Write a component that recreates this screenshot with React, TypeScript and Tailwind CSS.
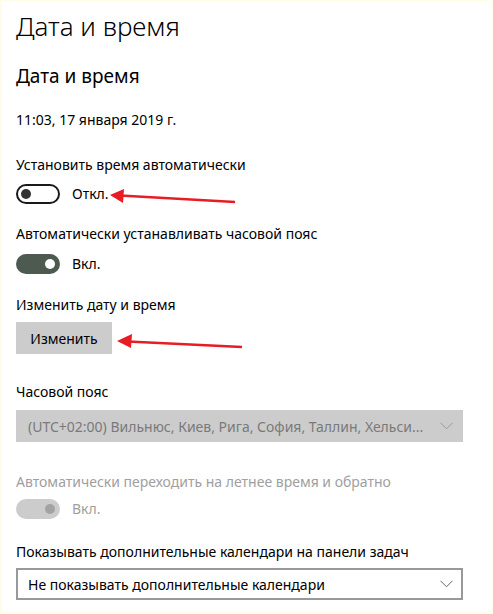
import React from "react";

const font = { fontFamily: '"Segoe UI", "Noto Sans", "Open Sans", sans-serif' };

function Chevron({ color }: { color: string }) {
  return (
    <svg width="13" height="8" viewBox="0 0 13 8" fill="none" className="shrink-0">
      <path d="M0.5 0.8 L6.5 6.8 L12.5 0.8" stroke={color} strokeWidth="1" />
    </svg>
  );
}

function Toggle({ state }: { state: "off" | "on" | "disabled" }) {
  if (state === "off")
    return (
      <div className="w-[44px] h-[20px] rounded-full border-2 border-[#1a1a1a] flex items-center pl-[3px] box-border">
        <div className="w-[10px] h-[10px] rounded-full bg-[#333333]" />
      </div>
    );
  if (state === "on")
    return (
      <div className="w-[44px] h-[20px] rounded-full bg-[#4c5a50] flex items-center justify-end pr-[5px]">
        <div className="w-[10px] h-[10px] rounded-full bg-white" />
      </div>
    );
  return (
    <div className="w-[44px] h-[20px] rounded-full bg-[#cccccc] flex items-center justify-end pr-[5px]">
      <div className="w-[10px] h-[10px] rounded-full bg-[#a3a3a3]" />
    </div>
  );
}

export default function App() {
  return (
    <div className="w-[493px] h-[614px] bg-[#fffde9] pt-[1px] pl-[2px]" style={font}>
      <div className="relative w-[489px] h-[610px] bg-white pl-[14px] pt-[7px] box-border text-black">
        <div className="h-[36px] text-[26px] leading-[36px] font-light">Дата и время</div>
        <div className="mt-[18px] h-[28px] text-[19px] leading-[28px]">Дата и время</div>
        <div className="mt-[20px] h-[20px] text-[14px] leading-[20px]">11:03, 17 января 2019 г.</div>

        <div className="mt-[25px] h-[20px] text-[14px] leading-[20px]">Установить время автоматически</div>
        <div className="mt-[9px] h-[20px] flex items-center gap-[12px]">
          <Toggle state="off" />
          <span className="text-[14px] leading-[20px]">Откл.</span>
        </div>

        <div className="mt-[20px] h-[20px] text-[14px] leading-[20px]">Автоматически устанавливать часовой пояс</div>
        <div className="mt-[10px] h-[20px] flex items-center gap-[12px]">
          <Toggle state="on" />
          <span className="text-[14px] leading-[20px]">Вкл.</span>
        </div>

        <div className="mt-[21px] h-[20px] text-[14px] leading-[20px]">Изменить дату и время</div>
        <div className="mt-[7px] w-[96px] h-[32px] bg-[#cccccc] flex items-center justify-center text-[14px]">
          Изменить
        </div>

        <div className="mt-[28px] h-[20px] text-[14px] leading-[20px]">Часовой пояс</div>
        <div className="mt-[8px] w-[447px] h-[32px] bg-[#cccccc] flex items-center justify-between gap-[8px] pl-[12px] pr-[10px] text-[14px] text-[#7a7a7a]">
          <span className="whitespace-nowrap overflow-hidden min-w-0">(UTC+02:00) Вильнюс, Киев, Рига, София, Таллин, Хельси...</span>
          <Chevron color="#9a9a9a" />
        </div>

        <div className="mt-[30px] h-[20px] text-[14px] leading-[20px] text-[#a0a0a0]">
          Автоматически переходить на летнее время и обратно
        </div>
        <div className="mt-[7px] h-[20px] flex items-center gap-[12px]">
          <Toggle state="disabled" />
          <span className="text-[14px] leading-[20px] text-[#a0a0a0]">Вкл.</span>
        </div>

        <div className="mt-[23px] h-[20px] text-[14px] leading-[20px]">
          Показывать дополнительные календари на панели задач
        </div>
        <div className="mt-[6px] w-[447px] h-[32px] border-2 border-[#999999] box-border flex items-center justify-between pl-[10px] pr-[8px] text-[14px]">
          <span>Не показывать дополнительные календари</span>
          <Chevron color="#666666" />
        </div>

        <svg className="absolute left-0 top-0" width="489" height="610" viewBox="2 1 489 610">
          <line x1="235" y1="202" x2="120" y2="195.5" stroke="#e81c24" strokeWidth="2.5" />
          <polygon points="110,195 124,189 123,203" fill="#e81c24" />
          <line x1="242" y1="347" x2="128" y2="341.5" stroke="#e81c24" strokeWidth="2.5" />
          <polygon points="117,341 132,334 131,348" fill="#e81c24" />
        </svg>
      </div>
    </div>
  );
}
